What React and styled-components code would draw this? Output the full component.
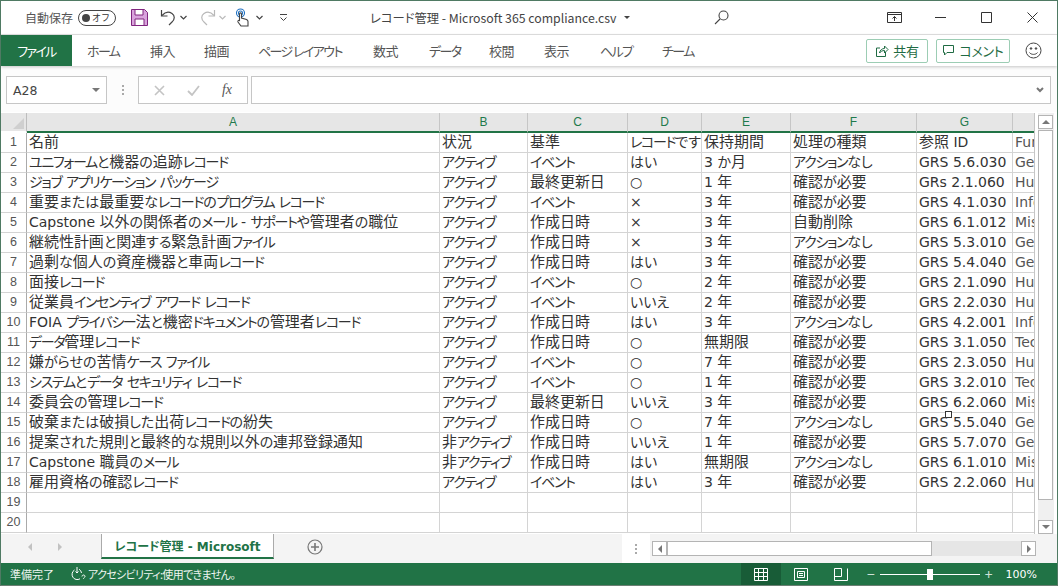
import React from 'react';
import styled, { createGlobalStyle } from 'styled-components';

const GREEN = '#217346';
const UI_FONT = '"Noto Sans CJK JP", "Noto Sans", sans-serif';
const CELL_FONT = '"DejaVu Sans", "Noto Sans CJK JP", sans-serif';

const GlobalStyle = createGlobalStyle`
  html, body { margin: 0; padding: 0; background: #fff; }
  * { box-sizing: border-box; }
`;

const COLUMNS = [
  { name: 'A', width: 413 },
  { name: 'B', width: 88 },
  { name: 'C', width: 100 },
  { name: 'D', width: 74 },
  { name: 'E', width: 89 },
  { name: 'F', width: 126 },
  { name: 'G', width: 96 },
  { name: '', width: 22 },
];

const ROWS = [
  ['名前', '状況', '基準', 'レコードです', '保持期間', '処理の種類', '参照 ID', 'Function'],
  ['ユニフォームと機器の追跡レコード', 'アクティブ', 'イベント', 'はい', '3 か月', 'アクションなし', 'GRS 5.6.030', 'General'],
  ['ジョブ アプリケーション パッケージ', 'アクティブ', '最終更新日', '○', '1 年', '確認が必要', 'GRs 2.1.060', 'Human'],
  ['重要または最重要なレコードのプログラム レコード', 'アクティブ', 'イベント', '×', '3 年', '確認が必要', 'GRS 4.1.030', 'Info'],
  ['Capstone 以外の関係者のメール - サポートや管理者の職位', 'アクティブ', '作成日時', '×', '3 年', '自動削除', 'GRS 6.1.012', 'Misc'],
  ['継続性計画と関連する緊急計画ファイル', 'アクティブ', '作成日時', '×', '3 年', 'アクションなし', 'GRS 5.3.010', 'General'],
  ['過剰な個人の資産機器と車両レコード', 'アクティブ', '作成日時', 'はい', '3 年', '確認が必要', 'GRS 5.4.040', 'General'],
  ['面接レコード', 'アクティブ', 'イベント', '○', '2 年', '確認が必要', 'GRS 2.1.090', 'Human'],
  ['従業員インセンティブ アワード レコード', 'アクティブ', 'イベント', 'いいえ', '2 年', '確認が必要', 'GRS 2.2.030', 'Human'],
  ['FOIA プライバシー法と機密ドキュメントの管理者レコード', 'アクティブ', '作成日時', 'はい', '3 年', 'アクションなし', 'GRS 4.2.001', 'Info'],
  ['データ管理レコード', 'アクティブ', '作成日時', '○', '無期限', '確認が必要', 'GRS 3.1.050', 'Tech'],
  ['嫌がらせの苦情ケース ファイル', 'アクティブ', 'イベント', '○', '7 年', '確認が必要', 'GRS 2.3.050', 'Human'],
  ['システムとデータ セキュリティ レコード', 'アクティブ', 'イベント', '○', '1 年', '確認が必要', 'GRS 3.2.010', 'Tech'],
  ['委員会の管理レコード', 'アクティブ', '最終更新日', 'いいえ', '3 年', '確認が必要', 'GRS 6.2.060', 'Misc'],
  ['破棄または破損した出荷レコードの紛失', 'アクティブ', '作成日時', '○', '7 年', 'アクションなし', 'GRS 5.5.040', 'General'],
  ['提案された規則と最終的な規則以外の連邦登録通知', '非アクティブ', '作成日時', 'いいえ', '1 年', '確認が必要', 'GRS 5.7.070', 'General'],
  ['Capstone 職員のメール', '非アクティブ', '作成日時', 'はい', '無期限', 'アクションなし', 'GRS 6.1.010', 'Misc'],
  ['雇用資格の確認レコード', 'アクティブ', 'イベント', 'はい', '3 年', '確認が必要', 'GRS 2.2.060', 'Human'],
  ['', '', '', '', '', '', '', ''],
  ['', '', '', '', '', '', '', ''],
];

const TABS = [
  ['ホーム', 32, 15], ['挿入', 25, 31], ['描画', 25, 29], ['ページ レイアウト', 86, 29], ['数式', 26, 29],
  ['データ', 31, 30], ['校閲', 26, 29], ['表示', 26, 29], ['ヘルプ', 31, 30], ['チーム', 31, 31],
];

const Window = styled.div`
  width: 1058px;
  height: 586px;
  overflow: hidden;
  display: flex;
  flex-direction: column;
  background: #fff;
  border: 1px solid #4f7a63;
  border-bottom: 1px solid #6b7f73;
  font-family: ${UI_FONT};
  color: #444;
`;

const TitleBar = styled.div`
  height: 34px;
  flex: none;
  display: flex;
  align-items: center;
  border-bottom: 1px solid #e2e2e2;
`;

const AutoSave = styled.span`
  margin-left: 24px;
  font-size: 12px;
  color: #555;
  font-feature-settings: "palt";
`;

const Toggle = styled.span`
  position: relative;
  width: 38px;
  height: 16px;
  margin-left: 5px;
  border: 1px solid #444;
  border-radius: 8px;
  display: flex;
  align-items: center;
  justify-content: flex-end;
  padding-right: 5px;
  font-size: 9px;
  color: #333;

  &::before {
    content: '';
    position: absolute;
    left: 3px;
    top: 3px;
    width: 8px;
    height: 8px;
    border-radius: 50%;
    background: #444;
  }
`;

const Quick = styled.div`
  display: flex;
  align-items: center;
  margin-left: 15px;
  width: 160px;
  flex: none;
  height: 24px;
`;

const QuickIcon = styled.span`
  display: inline-flex;
  flex: none;
  width: ${p => p.$w}px;
  margin-left: ${p => p.$gap || 0}px;
  justify-content: center;
`;

const DocTitle = styled.div`
  margin-left: 79px;
  width: 331px;
  flex: none;
  display: flex;
  align-items: center;
  font-size: 12.300px;
  color: #444;
  font-feature-settings: "palt";
  white-space: nowrap;
`;

const TitleCaret = styled.span`
  margin-left: 7px;
  width: 0;
  height: 0;
  border-left: 3px solid transparent;
  border-right: 3px solid transparent;
  border-top: 3px solid #444;
`;

const WindowControls = styled.div`
  margin-left: auto;
  padding-right: 2px;
  display: flex;
  align-items: center;
`;

const WindowButton = styled.span`
  width: 46px;
  display: flex;
  justify-content: center;
`;

const TabBar = styled.div`
  height: 31px;
  flex: none;
  display: flex;
  align-items: center;
  box-shadow: 0 1px 3px rgba(0, 0, 0, 0.22);
  position: relative;
`;

const FileTab = styled.div`
  width: 71px;
  height: 100%;
  background: ${GREEN};
  color: #fff;
  font-size: 13px;
  letter-spacing: -1.600px;
  display: flex;
  align-items: center;
  justify-content: center;
  font-feature-settings: "palt";
`;

const Tab = styled.div`
  width: ${p => p.$w}px;
  margin-left: ${p => p.$gap}px;
  flex: none;
  font-size: 13px;
  letter-spacing: ${p => (p.$kana ? '-1.600px' : '-0.400px')};
  color: #555;
  white-space: nowrap;
  font-feature-settings: "palt";
`;

const TabActions = styled.div`
  margin-left: auto;
  display: flex;
  align-items: center;
  gap: 8px;
  padding-right: 9px;
`;

const ActionButton = styled.div`
  height: 24px;
  width: ${p => p.$w}px;
  border: 1px solid #9ccdb4;
  border-radius: 2px;
  display: flex;
  align-items: center;
  justify-content: center;
  gap: 4px;
  font-size: 13px;
  letter-spacing: -0.300px;
  color: #1f6b43;
  font-feature-settings: "palt";
`;

const FormulaBar = styled.div`
  height: 46px;
  flex: none;
  padding: 10px 6px 8px 5px;
  display: flex;
  align-items: stretch;
  background: #fcfcfc;
`;

const NameBox = styled.div`
  width: 101px;
  border: 1px solid #c6c6c6;
  background: #fff;
  display: flex;
  align-items: center;
  justify-content: space-between;
  padding: 0 6px;
  font-family: "DejaVu Sans", sans-serif;
  font-size: 12.500px;
  color: #444;
`;

const Caret = styled.span`
  width: 0;
  height: 0;
  border-left: 4px solid transparent;
  border-right: 4px solid transparent;
  border-top: 4px solid #777;
`;

const Dots = styled.span`
  width: 31px;
  flex: none;
  display: flex;
  flex-direction: column;
  align-items: center;
  justify-content: center;
  gap: 2px;

  i {
    width: 2px;
    height: 2px;
    background: #aaa;
  }
`;

const FxBox = styled.div`
  width: 110px;
  flex: none;
  border: 1px solid #c6c6c6;
  background: #fff;
  display: flex;
  align-items: center;
  justify-content: space-around;
  padding: 0 4px;
  font-family: "Liberation Serif", serif;
  font-style: italic;
  font-size: 14px;
  color: #555;
`;

const FormulaInput = styled.div`
  flex: 1;
  margin-left: 3px;
  border: 1px solid #c6c6c6;
  background: #fff;
  display: flex;
  align-items: center;
  justify-content: flex-end;
  padding-right: 6px;
`;

const SheetArea = styled.div`
  flex: 1;
  display: flex;
  min-height: 0;
  position: relative;
  padding-top: 1px;
`;

const Sheet = styled.div`
  width: 1034px;
  flex: none;
  display: grid;
  grid-template-columns: 26px ${COLUMNS.map(c => `${c.width}px`).join(' ')};
  grid-auto-rows: 20px;
  grid-template-rows: 20px;
  align-content: start;
  overflow: hidden;
  border-right: 1px solid #c6c6c6;
`;

const Corner = styled.div`
  background: #e6e6e6;
  border-right: 1px solid #bdbdbd;
  border-bottom: 2px solid #fff;
  position: relative;

  &::after {
    content: '';
    position: absolute;
    right: 2px;
    bottom: 2px;
    border-left: 11px solid transparent;
    border-bottom: 11px solid #cfcfcf;
  }
`;

const ColumnHeader = styled.div`
  background: #e6e6e6;
  color: #1f7a4c;
  font-family: "Liberation Sans", sans-serif;
  font-size: 12px;
  line-height: 18px;
  text-align: center;
  border-right: 1px solid #c6c6c6;
  border-bottom: 2px solid ${GREEN};

  &:last-child {
    border-right: none;
  }
`;

const RowHeader = styled.div`
  background: #fff;
  color: #555;
  border-right: 1px solid #aaa;
  border-bottom: 1px solid #d4d4d4;
  font-family: "Liberation Sans", sans-serif;
  font-size: 12.500px;
  line-height: 19px;
  text-align: center;
`;

const Cell = styled.div`
  border-right: 1px solid #d4d4d4;
  border-bottom: 1px solid #d4d4d4;
  padding-left: 2px;
  font-family: ${CELL_FONT};
  font-size: 14px;
  line-height: 19px;
  color: #333;
  white-space: nowrap;
  overflow: hidden;
  font-feature-settings: "palt";

  &:nth-child(9n) {
    color: #555;
  }

  &:nth-child(9n + 1) {
    border-right: none;
    font-size: 13px;
    color: #5a4020;
  }
`;

const Kana = styled.span`
  letter-spacing: -1.300px;
`;

const Kanji = styled.span`
  font-size: 1.07em;
`;

const DragHandle = styled.span`
  position: absolute;
  left: 944px;
  top: 299px;
  width: 7px;
  height: 7px;
  background: #fff;
  border: 1px solid #333;
`;

const VScroll = styled.div`
  width: 16px;
  margin-left: 3px;
  flex: none;
  background: #f0f0f0;
  display: flex;
  flex-direction: column;
  padding-top: 2px;
`;

const ScrollButton = styled.div`
  width: ${p => p.$w || 15}px;
  height: ${p => p.$h || 15}px;
  flex: none;
  border: 1px solid #b4b4b4;
  background: #fff;
  display: flex;
  align-items: center;
  justify-content: center;
`;

const VDown = styled(ScrollButton)`
  margin-top: auto;
`;

const VThumb = styled.div`
  width: 15px;
  height: 370px;
  flex: none;
  margin-top: 1px;
  border: 1px solid #b4b4b4;
  background: #fff;
`;

const Arrow = styled.span`
  width: 0;
  height: 0;
  border: 4px solid transparent;
  ${p => p.$dir === 'up' && 'border-bottom-color: #777; border-top-width: 0;'}
  ${p => p.$dir === 'down' && 'border-top-color: #777; border-bottom-width: 0;'}
  ${p => p.$dir === 'left' && 'border-right-color: #777; border-left-width: 0;'}
  ${p => p.$dir === 'right' && 'border-left-color: #777; border-right-width: 0;'}
`;

const SheetTabs = styled.div`
  height: 29px;
  flex: none;
  display: flex;
  background: #f4f4f4;
`;

const TabNav = styled.div`
  width: 100px;
  height: 26px;
  flex: none;
  display: flex;
  align-items: center;
  gap: 26px;
  padding-left: 27px;
`;

const NavArrow = styled(Arrow)`
  opacity: 0.4;
`;

const SheetTab = styled.div`
  width: 173px;
  flex: none;
  height: 25px;
  background: #fff;
  border-left: 1px solid #aaa;
  border-right: 1px solid #aaa;
  border-bottom: 2px solid ${GREEN};
  color: ${GREEN};
  font-family: ${CELL_FONT};
  font-size: 12px;
  font-weight: bold;
  display: flex;
  align-items: center;
  justify-content: center;
  white-space: nowrap;
  font-feature-settings: "palt";
`;

const AddSheet = styled.div`
  margin-left: 33px;
  height: 26px;
  display: flex;
  align-items: center;
`;

const TabSplit = styled.div`
  margin-left: auto;
  margin-right: 2px;
  width: 28px;
  background: #fff;
  flex: none;
  display: flex;
  flex-direction: column;
  align-items: center;
  justify-content: center;
  gap: 2px;

  i {
    width: 2px;
    height: 2px;
    background: #aaa;
  }
`;

const HScroll = styled.div`
  width: 384px;
  flex: none;
  margin: 7px 21px 7px 0;
  background: #e6e6e6;
  display: flex;
`;

const HThumb = styled.div`
  width: 265px;
  flex: none;
  border: 1px solid #b4b4b4;
  background: #fff;
`;

const HEnd = styled(ScrollButton)`
  margin-left: auto;
`;

const StatusBar = styled.div`
  height: 22px;
  flex: none;
  background: ${GREEN};
  color: #fff;
  display: flex;
  align-items: center;
  font-size: 11px;
  font-feature-settings: "palt";
`;

const StatusText = styled.span`
  margin-left: 9px;
  color: #eef5f0;
  white-space: nowrap;
`;

const StatusNote = styled(StatusText)`
  margin-left: 17px;
  display: flex;
  align-items: center;
  gap: 2px;
  letter-spacing: -0.650px;
`;

const StatusRight = styled.div`
  margin-left: auto;
  display: flex;
  align-items: center;
  height: 100%;
`;

const ViewButton = styled.span`
  width: 40px;
  height: 100%;
  display: flex;
  align-items: center;
  justify-content: center;
  background: ${p => (p.$active ? '#185c37' : 'transparent')};
`;

const ZoomSlider = styled.div`
  display: flex;
  align-items: center;
  margin-left: 6px;
  gap: 5px;
  font-size: 14px;
  color: #cfe2d7;
`;

const ZoomTrack = styled.div`
  width: 100px;
  height: 1px;
  background: #fff;
  position: relative;

  &::after {
    content: '';
    position: absolute;
    left: 47px;
    top: -5px;
    width: 6px;
    height: 11px;
    background: #fff;
  }
`;

const ZoomValue = styled.span`
  margin: 0 20px 0 13px;
  font-family: "DejaVu Sans", sans-serif;
  font-size: 11px;
`;

const SaveIcon = () => (
  <svg width="17" height="17" viewBox="0 0 17 17">
    <path d="M.5.500h13l3 3v13H.5z" fill="#d9a3dc" stroke="#80267f" />
    <path d="M4 1v5h8V1" fill="#fff" stroke="#80267f" />
    <path d="M4 16v-6h9v6" fill="#fff" stroke="#80267f" />
  </svg>
);

const UndoIcon = ({ color }) => (
  <svg width="17" height="17" viewBox="0 0 17 17" fill="none" stroke={color} strokeWidth="1.2">
    <path d="M1.500 1v6h6" />
    <path d="M2 6.500C5 3 9 2.500 12 4.500s3 6 0 8.500l-3 3" />
  </svg>
);

const RedoIcon = ({ color }) => (
  <svg width="17" height="17" viewBox="0 0 17 17" fill="none" stroke={color} strokeWidth="1.2">
    <path d="M15.500 1v6h-6" />
    <path d="M15 6.500C12 3 8 2.500 5 4.500s-3 6 0 8.500l3 3" />
  </svg>
);

const TouchIcon = () => (
  <svg width="15" height="19" viewBox="0 0 15 19" fill="none" strokeWidth="1.1">
    <circle cx="5.500" cy="5" r="4" stroke="#1e6fc0" />
    <circle cx="5.500" cy="5" r="2" stroke="#1e6fc0" />
    <path d="M4.500 12V6c0-1.500 2-1.500 2 0v4l5 1.500c1 .5 1.500 1 1.500 2V18H6l-3-4c-.5-1 .5-2 1.500-1.500z" fill="#fff" stroke="#444" />
  </svg>
);

const MiniCaret = ({ color = '#444' }) => (
  <svg width="7" height="5" viewBox="0 0 7 5" fill="none" stroke={color} strokeWidth="1.2">
    <path d="M.5 1l3 3 3-3" />
  </svg>
);

const CustomizeIcon = () => (
  <svg width="9" height="8" viewBox="0 0 9 8" fill="none" stroke="#444">
    <path d="M1 .5h7" />
    <path d="M1.500 3.500l3 3 3-3" />
  </svg>
);

const SearchIcon = () => (
  <svg width="15" height="15" viewBox="0 0 15 15" fill="none" stroke="#444" strokeWidth="1.1">
    <circle cx="9.500" cy="5.500" r="4.500" />
    <path d="M6 9l-5 5" />
  </svg>
);

const RibbonDisplayIcon = () => (
  <svg width="15" height="13" viewBox="0 0 15 13" fill="none" stroke="#333">
    <path d="M.5 1.500h14v10H.5z" />
    <path d="M.5 3.500h14" />
    <path d="M7.500 10V5.500M5.500 7.500l2-2 2 2" />
  </svg>
);

const ShareIcon = () => (
  <svg width="14" height="14" viewBox="0 0 14 14" fill="none" stroke="#1f6b43">
    <path d="M5 4H1.500v8.500h9V8" />
    <path d="M4.500 9C5 6 7 4.500 9.500 4.500V2L13 5.500 9.500 9V6.500C7.500 6.500 5.500 7.500 4.500 9z" />
  </svg>
);

const CommentIcon = () => (
  <svg width="13" height="13" viewBox="0 0 13 13" fill="none" stroke="#1f6b43">
    <path d="M1.500 1.500h10v7H5l-2.500 2.500V8.500h-1z" />
  </svg>
);

const SmileIcon = () => (
  <svg width="17" height="17" viewBox="0 0 17 17" fill="none" stroke="#444">
    <circle cx="8.500" cy="8.500" r="7.500" />
    <circle cx="6" cy="6.500" r=".8" fill="#444" />
    <circle cx="11" cy="6.500" r=".8" fill="#444" />
    <path d="M4.500 10.500c1.500 2.500 6.500 2.500 8 0" />
  </svg>
);

const PlusCircle = () => (
  <svg width="16" height="16" viewBox="0 0 16 16" fill="none" stroke="#777" strokeWidth="1.2">
    <circle cx="8" cy="8" r="7" />
    <path d="M8 4v8M4 8h8" strokeWidth="1.6" />
  </svg>
);

const AccessibilityIcon = () => (
  <svg width="15" height="14" viewBox="0 0 15 14" fill="none" stroke="#fff">
    <path d="M3.500 3A5 5 0 1 0 9 11.800M10.500 6A5 5 0 0 0 8 2.200" />
    <path d="M6 0v6M4.500 4.500L6 6l1.500-1.500" />
    <path d="M11 9.500c0-2 3-2 3 0 0 1-1.500 1-1.500 2.200" />
  </svg>
);

const NormalViewIcon = () => (
  <svg width="14" height="13" viewBox="0 0 14 13" fill="none" stroke="#fff">
    <path d="M.5.500h13v12H.5zM.5 4.500h13M.5 8.500h13M4.500.5v12M9.500.5v12" />
  </svg>
);

const PageViewIcon = () => (
  <svg width="14" height="13" viewBox="0 0 14 13" fill="none" stroke="#fff">
    <path d="M.5.500h13v12H.5z" />
    <path d="M3.500 3.500h7v6h-7zM5 5.500h4M5 7.500h4" />
  </svg>
);

const BreakViewIcon = () => (
  <svg width="14" height="13" viewBox="0 0 14 13" fill="none" stroke="#fff">
    <path d="M.5.500v12h13V.5M.5 8.500h7M7.500.5v8M.5.500h7" />
  </svg>
);

const hasKana = text => /[\u30a0-\u30ff]/.test(text);

// カタカナは詰めて漢字は少し大きく (元の画面は Meiryo UI)
const cellText = text =>
  text.split(/([\u30a0-\u30ff]+|[\u4e00-\u9fff]+)/).map((part, i) => {
    if (i % 2 === 0) return part;
    return hasKana(part)
      ? <Kana key={i}>{part}</Kana>
      : <Kanji key={i}>{part}</Kanji>;
  });

export default function App() {
  return (
    <Window>
      <GlobalStyle />
      <TitleBar>
        <AutoSave>自動保存</AutoSave>
        <Toggle>オフ</Toggle>
        <Quick>
          <QuickIcon $w={17}><SaveIcon /></QuickIcon>
          <QuickIcon $w={17} $gap={12}><UndoIcon color="#444" /></QuickIcon>
          <QuickIcon $w={7} $gap={3}><MiniCaret /></QuickIcon>
          <QuickIcon $w={17} $gap={12}><RedoIcon color="#b8b8b8" /></QuickIcon>
          <QuickIcon $w={7} $gap={3}><MiniCaret color="#bbb" /></QuickIcon>
          <QuickIcon $w={15} $gap={9}><TouchIcon /></QuickIcon>
          <QuickIcon $w={7} $gap={6}><MiniCaret /></QuickIcon>
          <QuickIcon $w={9} $gap={16}><CustomizeIcon /></QuickIcon>
        </Quick>
        <DocTitle>レコード管理 - Microsoft 365 compliance.csv<TitleCaret /></DocTitle>
        <QuickIcon $w={40}><SearchIcon /></QuickIcon>
        <WindowControls>
          <WindowButton><RibbonDisplayIcon /></WindowButton>
          <WindowButton>
            <svg width="11" height="1" viewBox="0 0 11 1"><path d="M0 .5h11" stroke="#333" /></svg>
          </WindowButton>
          <WindowButton>
            <svg width="11" height="11" viewBox="0 0 11 11"><path d="M.5.500h10v10H.5z" fill="none" stroke="#333" /></svg>
          </WindowButton>
          <WindowButton>
            <svg width="11" height="11" viewBox="0 0 11 11"><path d="M.5.500l10 10M10.500.5l-10 10" fill="none" stroke="#333" /></svg>
          </WindowButton>
        </WindowControls>
      </TitleBar>

      <TabBar>
        <FileTab>ファイル</FileTab>
        {TABS.map(([label, w, gap]) => (
          <Tab key={label} $w={w} $gap={gap} $kana={hasKana(label)}>{label}</Tab>
        ))}
        <TabActions>
          <ActionButton $w={62}><ShareIcon />共有</ActionButton>
          <ActionButton $w={74}><CommentIcon />コメント</ActionButton>
          <QuickIcon $w={30}><SmileIcon /></QuickIcon>
        </TabActions>
      </TabBar>

      <FormulaBar>
        <NameBox>A28<Caret /></NameBox>
        <Dots><i /><i /><i /></Dots>
        <FxBox>
          <svg width="11" height="11" viewBox="0 0 11 11" fill="none" stroke="#c4c4c4" strokeWidth="1.6"><path d="M1 1l9 9M10 1l-9 9" /></svg>
          <svg width="13" height="11" viewBox="0 0 13 11" fill="none" stroke="#c4c4c4" strokeWidth="1.8"><path d="M1 6l4 4 7-9" /></svg>
          <span>fx</span>
        </FxBox>
        <FormulaInput>
          <svg width="8" height="6" viewBox="0 0 8 6" fill="none" stroke="#777" strokeWidth="2"><path d="M1 1l3 3 3-3" /></svg>
        </FormulaInput>
      </FormulaBar>

      <SheetArea>
        <Sheet>
          <Corner />
          {COLUMNS.map((c, i) => <ColumnHeader key={i}>{c.name}</ColumnHeader>)}
          {ROWS.map((row, r) => (
            <React.Fragment key={r}>
              <RowHeader>{r + 1}</RowHeader>
              {row.map((text, c) => <Cell key={c}>{cellText(text)}</Cell>)}
            </React.Fragment>
          ))}
        </Sheet>
        <VScroll>
          <ScrollButton $h={14}><Arrow $dir="up" /></ScrollButton>
          <VThumb />
          <VDown $h={14}><Arrow $dir="down" /></VDown>
        </VScroll>
        <DragHandle />
      </SheetArea>

      <SheetTabs>
        <TabNav>
          <NavArrow $dir="left" />
          <NavArrow $dir="right" />
        </TabNav>
        <SheetTab>レコード管理 - Microsoft</SheetTab>
        <AddSheet><PlusCircle /></AddSheet>
        <TabSplit><i /><i /><i /></TabSplit>
        <HScroll>
          <ScrollButton $w={15} $h={15}><Arrow $dir="left" /></ScrollButton>
          <HThumb />
          <HEnd $w={15} $h={15}><Arrow $dir="right" /></HEnd>
        </HScroll>
      </SheetTabs>

      <StatusBar>
        <StatusText>準備完了</StatusText>
        <StatusNote>
          <AccessibilityIcon />アクセシビリティ:使用できません。
        </StatusNote>
        <StatusRight>
          <ViewButton $active><NormalViewIcon /></ViewButton>
          <ViewButton><PageViewIcon /></ViewButton>
          <ViewButton><BreakViewIcon /></ViewButton>
          <ZoomSlider>
            <span>−</span>
            <ZoomTrack />
            <span>+</span>
          </ZoomSlider>
          <ZoomValue>100%</ZoomValue>
        </StatusRight>
      </StatusBar>
    </Window>
  );
}
